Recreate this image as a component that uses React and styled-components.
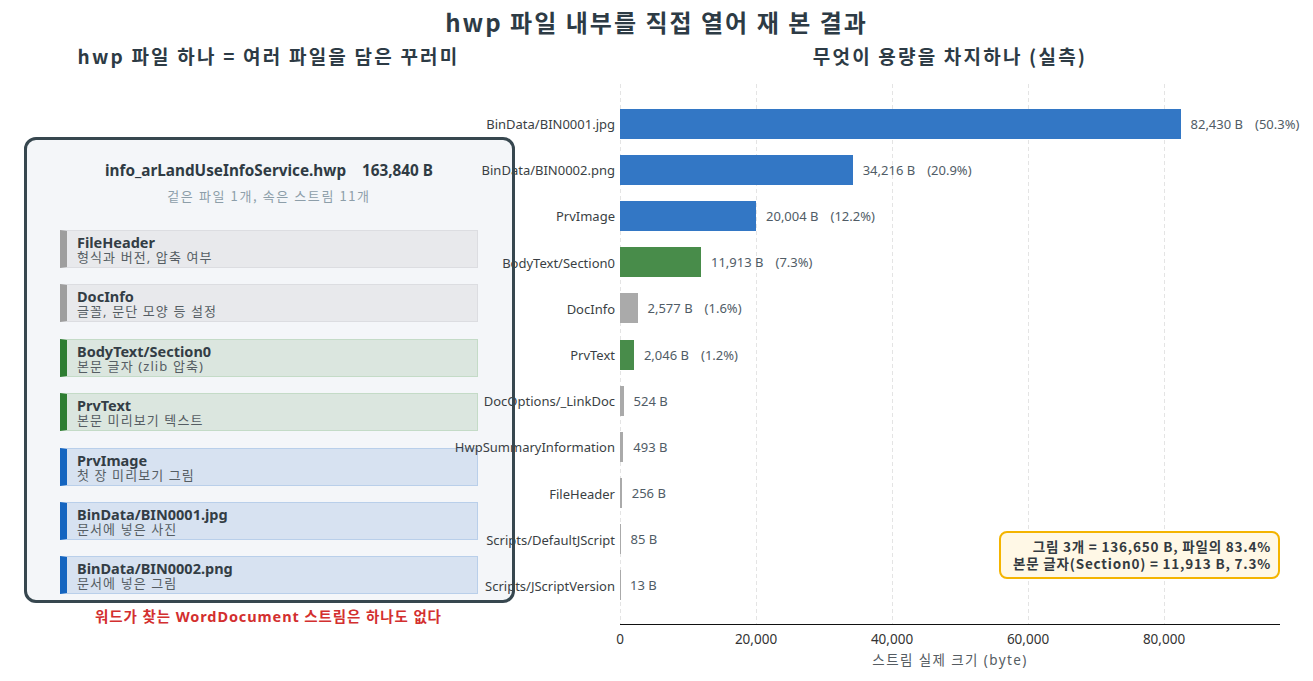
import React from 'react';
import styled, { createGlobalStyle } from 'styled-components';

const GlobalStyle = createGlobalStyle`
  html, body {
    margin: 0;
    padding: 0;
    background: #ffffff;
  }
  body {
    font-family: 'Noto Sans', 'Noto Sans CJK KR', sans-serif;
    color: #2d3b45;
  }
`;

const XMAX = 97059;
const PLOT_W = 660;

const streams = [
  { name: 'BinData/BIN0001.jpg', size: 82430, kind: 'img', pct: '50.3%' },
  { name: 'BinData/BIN0002.png', size: 34216, kind: 'img', pct: '20.9%' },
  { name: 'PrvImage', size: 20004, kind: 'img', pct: '12.2%' },
  { name: 'BodyText/Section0', size: 11913, kind: 'text', pct: '7.3%' },
  { name: 'DocInfo', size: 2577, kind: 'meta', pct: '1.6%' },
  { name: 'PrvText', size: 2046, kind: 'text', pct: '1.2%' },
  { name: 'DocOptions/_LinkDoc', size: 524, kind: 'meta' },
  { name: 'HwpSummaryInformation', size: 493, kind: 'meta' },
  { name: 'FileHeader', size: 256, kind: 'meta' },
  { name: 'Scripts/DefaultJScript', size: 85, kind: 'meta' },
  { name: 'Scripts/JScriptVersion', size: 13, kind: 'meta' },
];

const parts = [
  { name: 'FileHeader', desc: '형식과 버전, 압축 여부', kind: 'meta' },
  { name: 'DocInfo', desc: '글꼴, 문단 모양 등 설정', kind: 'meta' },
  { name: 'BodyText/Section0', desc: '본문 글자 (zlib 압축)', kind: 'text' },
  { name: 'PrvText', desc: '본문 미리보기 텍스트', kind: 'text' },
  { name: 'PrvImage', desc: '첫 장 미리보기 그림', kind: 'img' },
  { name: 'BinData/BIN0001.jpg', desc: '문서에 넣은 사진', kind: 'img' },
  { name: 'BinData/BIN0002.png', desc: '문서에 넣은 그림', kind: 'img' },
];

const barColor = { img: '#3377c5', text: '#488c4a', meta: '#aaaaaa' };

const boxColor = {
  meta: { bg: '#e8e9ec', line: '#dcdde1', stripe: '#9e9e9e' },
  text: { bg: '#dbe6df', line: '#c4dbc7', stripe: '#2e7d32' },
  img: { bg: '#d7e2f1', line: '#b9cfea', stripe: '#1565c0' },
};

const fmt = n => n.toLocaleString('en-US');

const Page = styled.div`
  width: 1313px;
  height: 681px;
  overflow: hidden;
  display: flex;
  flex-direction: column;
`;

const Title = styled.h1`
  margin: 0;
  height: 44px;
  line-height: 44px;
  text-align: center;
  font-family: 'Noto Sans CJK KR', sans-serif;
  font-size: 24px;
  letter-spacing: 2px;
  font-weight: 700;
  color: #2d3b45;
`;

const Columns = styled.div`
  display: grid;
  grid-template-columns: 537px 1fr;
`;

const LeftCol = styled.div`
  display: flex;
  flex-direction: column;
  align-items: center;
`;

const RightCol = styled.div`
  display: flex;
  flex-direction: column;
`;

const SubTitle = styled.h2`
  margin: 0;
  height: 24px;
  line-height: 24px;
  font-family: 'Noto Sans CJK KR', sans-serif;
  font-size: 19px;
  letter-spacing: 2.2px;
  font-weight: 700;
  color: #2d3b45;
  text-align: center;
  width: ${p => p.$width || 'auto'};
  margin-left: ${p => p.$shift || '0'};
`;

const Panel = styled.div`
  position: relative;
  margin-top: 69px;
  margin-left: 1px;
  width: 485px;
  height: 460px;
  padding: 3px;
  border-radius: 12px;
  background: #f4f6f9;
  display: flex;
  flex-direction: column;
  align-items: center;
  &::after {
    content: '';
    position: absolute;
    inset: 0;
    border: 3px solid #37474f;
    border-radius: 12px;
    z-index: 2;
    pointer-events: none;
  }
`;

const FileName = styled.div`
  margin-top: 20px;
  line-height: 20px;
  font-size: 15.3px;
  font-weight: 700;
  color: #2f3b44;
  white-space: pre;
`;

const FileNote = styled.div`
  margin-top: 7px;
  line-height: 18px;
  font-family: 'Noto Sans CJK KR', sans-serif;
  font-size: 13px;
  letter-spacing: 1.6px;
  color: #8d9ea9;
`;

const PartList = styled.div`
  margin-top: 25px;
  display: flex;
  flex-direction: column;
  gap: 16.4px;
`;

const PartBox = styled.div`
  box-sizing: border-box;
  width: 418px;
  height: 38px;
  padding: 4px 0 0 10px;
  background: ${p => boxColor[p.$kind].bg};
  border: 1.5px solid ${p => boxColor[p.$kind].line};
  border-left: 7px solid ${p => boxColor[p.$kind].stripe};
  display: flex;
  flex-direction: column;
`;

const PartName = styled.div`
  line-height: 15px;
  font-size: 14.5px;
  font-weight: 700;
  color: #333d45;
`;

const PartDesc = styled.div`
  line-height: 15px;
  font-size: 13px;
  letter-spacing: 1.1px;
  color: #555d63;
`;

const Warning = styled.div`
  margin-top: 3px;
  line-height: 20px;
  font-size: 14.5px;
  letter-spacing: 0.9px;
  font-weight: 700;
  color: #d32f2f;
`;

const Chart = styled.div`
  margin-top: 16px;
  display: grid;
  grid-template-columns: 83px ${PLOT_W}px;
`;

const YAxis = styled.div`
  height: 541px;
  box-sizing: border-box;
  padding: 17px 0 16px;
  display: flex;
  flex-direction: column;
`;

const YLabel = styled.div`
  position: relative;
  z-index: 1;
  flex: 1;
  display: flex;
  justify-content: flex-end;
  align-items: center;
  padding-right: 5px;
  white-space: nowrap;
  font-size: 13px;
  color: #3a3f44;
`;

const Plot = styled.div`
  position: relative;
  height: 541px;
  box-sizing: border-box;
  padding: 17px 0 16px;
  border-bottom: 1.5px solid #111111;
  display: flex;
  flex-direction: column;
`;

const Grid = styled.svg`
  position: absolute;
  inset: 0;
  width: 100%;
  height: 100%;
`;

const BarRow = styled.div`
  position: relative;
  flex: 1;
  display: flex;
  align-items: center;
`;

const Bar = styled.div`
  height: 30px;
  flex: none;
  background: ${p => barColor[p.$kind]};
`;

const BarValue = styled.span`
  margin-left: 10px;
  white-space: nowrap;
  font-size: 13px;
  color: #505c66;
`;

const Share = styled.span`
  margin-left: 12px;
`;

const Callout = styled.div`
  position: absolute;
  right: 0;
  bottom: 45px;
  box-sizing: border-box;
  width: 281px;
  padding: 5px 7px 5px 0;
  background: #fff8e6;
  border: 2px solid #f4b400;
  border-radius: 8px;
  text-align: right;
  font-family: 'Noto Sans CJK KR', sans-serif;
  font-size: 13.5px;
  letter-spacing: 0.8px;
  font-weight: 700;
  line-height: 17px;
  color: #333a40;
`;

const TickRow = styled.div`
  grid-column: 2;
  display: flex;
  height: 22px;
  align-items: flex-end;
`;

const Tick = styled.div`
  width: 136px;
  flex: none;
  font-size: 13.5px;
  line-height: 16px;
  color: #333;
  & > span {
    display: inline-block;
    transform: translateX(-50%);
  }
`;

const XTitle = styled.div`
  grid-column: 2;
  margin-top: 4px;
  text-align: center;
  line-height: 18px;
  font-size: 13.5px;
  letter-spacing: 1.4px;
  color: #555c62;
`;

const ticks = [0, 20000, 40000, 60000, 80000];

const PartItem = ({ part }) => (
  <PartBox $kind={part.kind}>
    <PartName>{part.name}</PartName>
    <PartDesc>{part.desc}</PartDesc>
  </PartBox>
);

const SizeChart = () => (
  <Chart>
    <YAxis>
      {streams.map(s => (
        <YLabel key={s.name}>{s.name}</YLabel>
      ))}
    </YAxis>
    <Plot>
      <Grid>
        {ticks.map(t => {
          const x = Math.round((t / XMAX) * PLOT_W) + 0.5;
          return (
            <line
              key={t}
              x1={x}
              x2={x}
              y1="0"
              y2="541"
              stroke="#e4e4e4"
              strokeWidth="1"
              strokeDasharray="4 3"
            />
          );
        })}
      </Grid>
      {streams.map(s => (
        <BarRow key={s.name}>
          <Bar $kind={s.kind} style={{ width: (s.size / XMAX) * PLOT_W }} />
          <BarValue>
            {fmt(s.size)} B{s.pct && <Share>({s.pct})</Share>}
          </BarValue>
        </BarRow>
      ))}
      <Callout>
        그림 3개 = 136,650 B, 파일의 83.4%
        <br />
        본문 글자(Section0) = 11,913 B, 7.3%
      </Callout>
    </Plot>
    <TickRow>
      {ticks.map(t => (
        <Tick key={t}>
          <span>{fmt(t)}</span>
        </Tick>
      ))}
    </TickRow>
    <XTitle>스트림 실제 크기 (byte)</XTitle>
  </Chart>
);

const App = () => (
  <Page>
    <GlobalStyle />
    <Title>hwp 파일 내부를 직접 열어 재 본 결과</Title>
    <Columns>
      <LeftCol>
        <SubTitle>hwp 파일 하나 = 여러 파일을 담은 꾸러미</SubTitle>
        <Panel>
          <FileName>{'info_arLandUseInfoService.hwp    163,840 B'}</FileName>
          <FileNote>겉은 파일 1개, 속은 스트림 11개</FileNote>
          <PartList>
            {parts.map(p => (
              <PartItem key={p.name} part={p} />
            ))}
          </PartList>
        </Panel>
        <Warning>워드가 찾는 WordDocument 스트림은 하나도 없다</Warning>
      </LeftCol>
      <RightCol>
        <SubTitle $width="660px" $shift="83px">
          무엇이 용량을 차지하나 (실측)
        </SubTitle>
        <SizeChart />
      </RightCol>
    </Columns>
  </Page>
);

export default App;
